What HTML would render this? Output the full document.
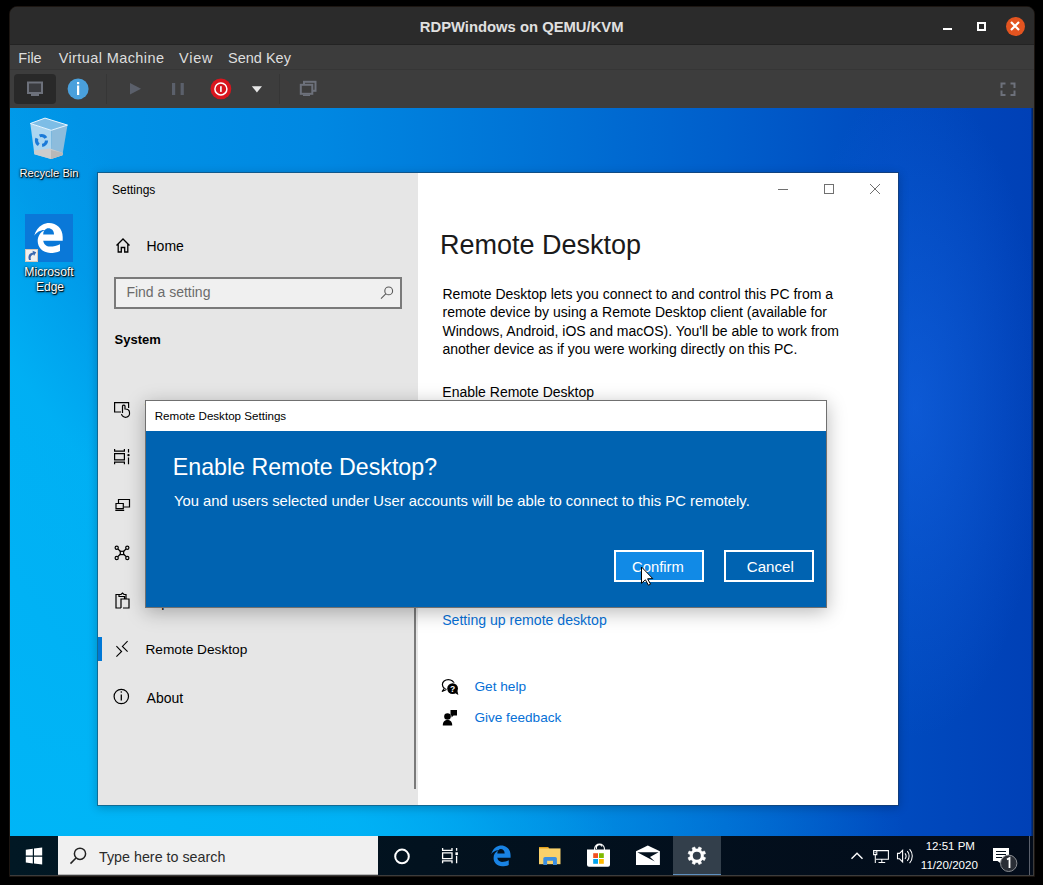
<!DOCTYPE html>
<html><head><meta charset="utf-8">
<style>
*{margin:0;padding:0;box-sizing:border-box}
html,body{width:1043px;height:885px;overflow:hidden;background:#000;font-family:"Liberation Sans",sans-serif}
.a{position:absolute}
.t{position:absolute;white-space:nowrap;line-height:1}
svg{position:absolute;overflow:visible}
#win{left:10px;top:7px;width:1024px;height:869px;background:#3c3c3c;border-radius:7px 7px 0 0;overflow:hidden}
#hdr{left:10px;top:7px;width:1024px;height:38px;background:#2b2b2b;border-bottom:1px solid #232323;border-radius:7px 7px 0 0}
#menu{left:10px;top:45px;width:1024px;height:25px;background:#3c3c3c;border-bottom:1px solid #363636}
#tool{left:10px;top:70px;width:1024px;height:38px;background:#3d3d3d}
.mt{color:#dedede;font-size:14.5px}
#disp{left:10px;top:108px;width:1023px;height:767px;overflow:hidden;
 background:radial-gradient(ellipse 130px 330px at 905px 300px, rgba(25,105,235,.5), rgba(25,105,235,0)),
 radial-gradient(ellipse 900px 460px at 0% 100%, rgba(0,182,247,.9) 0%, rgba(0,178,245,.6) 50%, rgba(0,170,240,0) 100%),
 linear-gradient(53deg, rgba(0,182,247,1) 0%, rgba(0,178,245,.9) 24%, rgba(0,170,240,.3) 33%, rgba(0,160,240,0) 40%),
 linear-gradient(90deg,#0096e7 0%,#0088e2 30%,#0074d6 50%,#005ecb 70%,#004cc0 85%,#0040b6 100%)}
</style></head><body>
<div class="a" style="left:9px;top:6px;width:1026px;height:871px;border:1px solid #1c1612;border-radius:8px 8px 0 0"></div>
<div id="win" class="a"></div>
<div id="hdr" class="a"></div>
<div class="t" style="left:419.8px;top:19.5px;font-size:14.8px;font-weight:bold;color:#e0e0e0">RDPWindows on QEMU/KVM</div>
<div class="a" style="left:943px;top:28px;width:9px;height:2px;background:#fff"></div>
<div class="a" style="left:977px;top:22px;width:9px;height:9px;border:2px solid #fff"></div>
<div class="a" style="left:1005.5px;top:16.5px;width:19px;height:19px;border-radius:50%;background:#e35420"></div>
<svg style="left:1015px;top:26px" width="1" height="1"><path d="M-4,-4L4,4M4,-4L-4,4" stroke="#fff" stroke-width="2.2"/></svg>
<div id="menu" class="a"></div>
<div class="t mt" style="left:18.3px;top:50.5px">File</div>
<div class="t mt" style="left:58.7px;top:50.5px;letter-spacing:.4px">Virtual Machine</div>
<div class="t mt" style="left:179px;top:50.5px;letter-spacing:.8px">View</div>
<div class="t mt" style="left:228px;top:50.5px">Send Key</div>
<div id="tool" class="a"></div>
<div class="a" style="left:14px;top:74px;width:42px;height:30px;border-radius:4px;background:#292929"></div>
<svg style="left:0;top:0" width="1" height="1">
 <rect x="28" y="82.5" width="14" height="10.5" fill="#3a3b3f" stroke="#6d717b" stroke-width="2"/>
 <rect x="31" y="94" width="8" height="2" fill="#6d717b"/>
 <circle cx="78.1" cy="88.9" r="10.5" fill="#4aa0dc"/>
 <rect x="77" y="82" width="2.2" height="2.2" fill="#fff"/>
 <rect x="77" y="85.5" width="2.2" height="9.5" fill="#fff"/>
 <rect x="106" y="74" width="1" height="30" fill="#363636"/>
 <path d="M130,83 L141,88.8 L130,94.6Z" fill="#5b606b"/>
 <rect x="172" y="83" width="3.2" height="12" fill="#5b606b"/>
 <rect x="180.6" y="83" width="3.2" height="12" fill="#5b606b"/>
 <circle cx="220.9" cy="88.8" r="10.4" fill="#d8161e"/>
 <circle cx="220.9" cy="88.9" r="6" fill="none" stroke="#fff" stroke-width="1.5"/>
 <rect x="220" y="86.2" width="1.8" height="5.7" fill="#eee"/>
 <path d="M251.8,86.2 H262 L256.9,92.4Z" fill="#e8e8e8"/>
 <rect x="279" y="74" width="1" height="30" fill="#363636"/>
 <rect x="304" y="81.8" width="11.5" height="9" fill="none" stroke="#6d717b" stroke-width="2"/>
 <rect x="300.8" y="84.8" width="11.5" height="9" fill="#3d3d3d" stroke="#6d717b" stroke-width="2"/>
 <rect x="303" y="94.5" width="7" height="1.5" fill="#6d717b"/>
 <path d="M1001.5,88V83.5H1005.5M1010.5,83.5H1014.5V88M1014.5,90.5V95H1010.5M1005.5,95H1001.5V90.5" fill="none" stroke="#6d717b" stroke-width="2"/>
</svg>

<div id="disp" class="a"></div>
<!-- desktop icons -->
<svg style="left:0;top:0" width="1" height="1">
 <path d="M30.3,123.5 L51.2,130.3 L51,159 L34.4,154.2Z" fill="#acd6f0"/>
 <path d="M51.2,130.3 L67.5,125.1 L62.4,155.2 L51,159Z" fill="#8dbcdc"/>
 <path d="M33.8,150.5 L50,148.5 L63,153 L62.4,155.2 L51,159 L34.4,154.2Z" fill="#cdcdcd"/>
 <path d="M51,150 L63,153 L62.4,155.2 L51,159Z" fill="#b8b8b8"/>
 <path d="M30.3,123.5 L45,118.1 L67.5,125.1 L51.2,130.3Z" fill="#7dbde6" stroke="#e8f5ff" stroke-width="1"/>
 <circle cx="41.5" cy="140.5" r="5" fill="none" stroke="#1a7ad8" stroke-width="3.2" stroke-dasharray="7 3.5"/>
</svg>
<div class="t" style="left:19.5px;top:168.3px;font-size:11.2px;color:#fff;text-shadow:1px 1px 1px #000,0 0 2px rgba(0,0,0,.9),0 1px 3px rgba(0,0,0,.6)">Recycle Bin</div>
<div class="a" style="left:25px;top:214px;width:48px;height:48px;background:#0a78d8"></div>
<svg style="left:0;top:0" width="1" height="1">
 <path fill-rule="evenodd" fill="#fff" d="M34.2,235.7 C35.5,231 38.5,227 42,225 C44.5,223.5 47,223 49.1,223 C56.5,223 62.7,228.5 62.7,237.1 L62.7,240.7 L43.2,240.7 C43.8,244.5 46.5,246.6 50,246.6 C53.5,246.6 57,245.5 60,244.2 L60,250.9 C57,252.3 53.5,252.9 50.3,252.9 C42.5,252.9 37.7,247.5 37.7,241.1 C37.7,236.5 40,232.5 44.8,230.1 C41,229.8 36.5,232.3 34.2,235.7Z M43.2,234.6 C43.3,232.5 43.8,231.1 44.8,230.1 C45.8,228.9 47,228.3 48.3,228.3 C51.5,228.3 54,230.5 54,234.6Z"/>
 <rect x="25.5" y="249.5" width="12" height="12" fill="#f0f0f0" stroke="#d8c8b8" stroke-width="1"/>
 <path d="M29,260 C27.5,256 29,253 33,252.5 L32.5,250.8 L36.2,252.2 L34,256 L33.6,254.5 C31,255 30,257 31,260Z" fill="#3a68b0"/>
</svg>
<div class="t" style="left:24.3px;top:266.3px;font-size:12.2px;color:#fff;text-shadow:1px 1px 1px #000,0 0 2px rgba(0,0,0,.9),0 1px 3px rgba(0,0,0,.6)">Microsoft</div>
<div class="t" style="left:36px;top:281.4px;font-size:12px;color:#fff;text-shadow:1px 1px 1px #000,0 0 2px rgba(0,0,0,.9),0 1px 3px rgba(0,0,0,.6)">Edge</div>

<!-- settings window -->
<div class="a" style="left:97px;top:172px;width:802px;height:634px;border:1px solid rgba(30,50,70,.55);box-shadow:0 2px 9px rgba(0,0,0,.22)"></div>
<div class="a" style="left:98px;top:173px;width:320px;height:632px;background:#e6e6e6"></div>
<div class="a" style="left:418px;top:173px;width:480px;height:632px;background:#fff"></div>
<div class="t" style="left:112px;top:183.6px;font-size:12px;color:#000">Settings</div>
<svg style="left:0;top:0" width="1" height="1">
 <path d="M116.5,245.5 L123,239 L129.5,245.5 M118.2,244 V252 H121.3 V247.5 H124.7 V252 H127.8 V244" fill="none" stroke="#000" stroke-width="1.3"/>
</svg>
<div class="t" style="left:146.5px;top:239.3px;font-size:14px;color:#000">Home</div>
<div class="a" style="left:114px;top:277px;width:288px;height:32px;border:2px solid #7a7a7a;background:#f0f0f0"></div>
<div class="t" style="left:126.4px;top:285px;font-size:14px;color:#6b6b6b">Find a setting</div>
<svg style="left:0;top:0" width="1" height="1">
 <circle cx="388.7" cy="290.9" r="3.9" fill="none" stroke="#5a5a5a" stroke-width="1.1"/>
 <path d="M386,293.7 L381,298.7" stroke="#5a5a5a" stroke-width="1.1"/>
</svg>
<div class="t" style="left:114.6px;top:333px;font-size:13px;font-weight:bold;color:#000">System</div>
<svg style="left:0;top:0" width="1" height="1" fill="none" stroke="#000" stroke-width="1.2">
 <path d="M121,412 H114.6 V402.6 H128.6 V408"/>
 <path d="M122.5,413 V406 A1.3,1.3 0 0 1 125,406 V409 C128,409 129.5,410 129.5,412.5 A4,4 0 0 1 121.5,414"/>
 <path d="M114.6,449 V451.2 H124.4 V449 M114.6,464.3 V462.1 H124.4 V464.3 M114.6,453.6 H124.4 V459.8 H114.6Z M128.5,449 V452.6 M128.5,457.6 V464.3"/>
 <circle cx="128.5" cy="455.1" r="1.2" fill="#000" stroke="none"/>
 <path d="M118.5,503 V499.5 H129.5 V507 H124"/>
 <path d="M115.3,510.4 H124.2 M116,503.5 H123.3 V508.6 H116Z"/>
 <path d="M118,549 L120.5,551.5 M126,549 L123.5,551.5 M118,556.5 L120.5,554 M126,556.5 L123.5,554"/>
 <rect x="120.3" y="551.3" width="3.3" height="3.3"/>
 <circle cx="116.7" cy="547.7" r="1.6"/><circle cx="127.3" cy="547.7" r="1.6"/><circle cx="116.7" cy="558" r="1.6"/><circle cx="127.3" cy="558" r="1.6"/>
 <path d="M119,594.5 H116 V608 H121 M123,608 H129 V599 H121 V608 M126,599 V594.5 H124 L122.5,593 L121,594.5 H119 V596.5 H124.5 V599"/>
 <path d="M116.4,646.2 L121.6,651.5 L116.4,656.7 M127.6,641.2 L122.4,646.4 L127.6,651.6" stroke-width="1.1"/>
 <circle cx="121.3" cy="696.5" r="7.2"/>
 <path d="M121.3,694.5 V700.5" stroke-width="1.3"/>
 <circle cx="121.3" cy="692" r=".8" fill="#000" stroke="none"/>
</svg>
<div class="t" style="left:145px;top:401.5px;font-size:14px;color:#000">Tablet mode</div>
<div class="t" style="left:145px;top:446px;font-size:14px;color:#000">Multitasking</div>
<div class="t" style="left:145px;top:494px;font-size:14px;color:#000">Projecting to this PC</div>
<div class="t" style="left:145px;top:542px;font-size:14px;color:#000">Shared experiences</div>
<div class="t" style="left:145px;top:595.4px;font-size:14px;color:#000">Clipboard</div>
<div class="a" style="left:98px;top:637px;width:4px;height:24px;background:#0078d7"></div>
<div class="t" style="left:145.4px;top:643.1px;font-size:13.7px;color:#000">Remote Desktop</div>
<div class="t" style="left:146.6px;top:691px;font-size:14px;color:#000">About</div>
<div class="a" style="left:414px;top:420px;width:2px;height:369px;background:#7a7a7a"></div>

<!-- content -->
<svg style="left:0;top:0" width="1" height="1" fill="none" stroke="#707070" stroke-width="1">
 <path d="M778,189.5 H788"/>
 <rect x="824.5" y="184.5" width="9" height="9"/>
 <path d="M870,184 L880,194 M880,184 L870,194"/>
</svg>
<div class="t" style="left:440px;top:231.9px;font-size:27px;color:#1a1a1a">Remote Desktop</div>
<div class="a" style="left:442.5px;top:285px;width:420px;font-size:14px;line-height:18.3px;color:#000">Remote Desktop lets you connect to and control this PC from a<br>remote device by using a Remote Desktop client (available for<br>Windows, Android, iOS and macOS). You'll be able to work from<br>another device as if you were working directly on this PC.</div>
<div class="t" style="left:442.3px;top:385.1px;font-size:14px;color:#000">Enable Remote Desktop</div>
<div class="t" style="left:442.2px;top:612.9px;font-size:14.1px;color:#0670d6">Setting up remote desktop</div>
<svg style="left:0;top:0" width="1" height="1">
 <ellipse cx="448.3" cy="684.6" rx="5.9" ry="5" fill="none" stroke="#000" stroke-width="1.2"/>
 <path d="M444.5,688.2 L442,691.5 L446.5,689.5" fill="#fff" stroke="#000" stroke-width="1.1"/>
 <circle cx="452.6" cy="688.6" r="6.2" fill="#fff"/>
 <circle cx="452.6" cy="688.6" r="5.4" fill="#000"/>
 <path d="M455,693 L458.3,695 L457.5,691" fill="#000"/>
 <text x="452.5" y="692" font-size="8.5" font-weight="bold" fill="#fff" text-anchor="middle" font-family="Liberation Sans">?</text>
 <circle cx="447.5" cy="716.5" r="3.3" fill="#000"/>
 <path d="M442.8,725.5 C442.8,721.5 444.8,720 447.5,720 C450.2,720 452.2,721.5 452.2,725.5Z" fill="#000"/>
 <path d="M450.5,710 H457 V715.5 H453.5 L451.5,717.5 V715.5 H450.5Z" fill="#000"/>
</svg>
<div class="t" style="left:474.4px;top:679.8px;font-size:13.7px;color:#0670d6">Get help</div>
<div class="t" style="left:474.4px;top:711.1px;font-size:13.6px;color:#0670d6">Give feedback</div>

<!-- dialog -->
<div class="a" style="left:145px;top:400px;width:682px;height:208px;border:1px solid #707070;background:#fff;box-shadow:0 4px 18px rgba(0,0,0,.28)"></div>
<div class="a" style="left:146px;top:431px;width:680px;height:176px;background:#0063b1"></div>
<div class="t" style="left:154.7px;top:410px;font-size:11.6px;color:#000">Remote Desktop Settings</div>
<div class="t" style="left:172.8px;top:456.3px;font-size:23.2px;color:#fff">Enable Remote Desktop?</div>
<div class="t" style="left:174px;top:493.5px;font-size:14.8px;color:#fff">You and users selected under User accounts will be able to connect to this PC remotely.</div>
<div class="a" style="left:614px;top:550px;width:90px;height:32px;border:2px solid #fff;background:#118ae6"></div>
<div class="a" style="left:724px;top:550px;width:90px;height:32px;border:2px solid #fff"></div>
<div class="t" style="left:632px;top:559.7px;font-size:14.8px;color:#fff">Confirm</div>
<div class="t" style="left:746.8px;top:558.7px;font-size:15.1px;color:#fff">Cancel</div>
<svg style="left:0;top:0" width="1" height="1">
 <path d="M641.5,567 V583.3 L645.4,579.8 L648.4,585.2 L650.6,584.2 L647.6,578.8 L652.8,578.6Z" fill="#fff" stroke="#000" stroke-width="1" stroke-linejoin="round"/>
</svg>


<div class="a" style="left:1031px;top:108px;width:2px;height:728px;background:linear-gradient(90deg,rgba(0,0,0,.15),rgba(0,0,0,.5))"></div>
<!-- taskbar -->
<div class="a" style="left:10px;top:836px;width:1023px;height:39px;background:linear-gradient(90deg,#011824 0%,#02121f 40%,#030c1a 100%)"></div>
<svg style="left:0;top:0" width="1" height="1">
 <path d="M25.8,849.8 L32.8,848.8 V855.5 H25.8Z M34,848.6 L42.2,847.5 V855.5 H34Z M25.8,856.7 H32.8 V863.4 L25.8,862.4Z M34,856.7 H42.2 V864.6 L34,863.5Z" fill="#fff"/>
</svg>
<div class="a" style="left:58px;top:836px;width:320px;height:39px;background:#f0f0f0;border-bottom:1px solid #b8b8b8"></div>
<svg style="left:0;top:0" width="1" height="1">
 <circle cx="80" cy="853.8" r="5.6" fill="none" stroke="#222" stroke-width="1.5"/>
 <path d="M76,858 L70.5,863.6" stroke="#222" stroke-width="1.5"/>
</svg>
<div class="t" style="left:99px;top:849.6px;font-size:14.3px;color:#2b2b2b">Type here to search</div>
<svg style="left:0;top:0" width="1" height="1">
 <circle cx="402" cy="856.4" r="6.8" fill="none" stroke="#fff" stroke-width="2"/>
 <path d="M442.6,848 V850.3 H452 V848 M442.6,863.2 V860.8 H452 V863.2 M442.6,852.9 H452 V858.7 H442.6Z M456.6,848 V850.8 M456.6,855.8 V863.2" fill="none" stroke="#fff" stroke-width="1.3"/>
 <rect x="455.4" y="852.3" width="2.5" height="2.7" fill="#fff"/>
 <g transform="translate(491.2,845.4) scale(0.68,0.70) translate(-34.2,-223)"><path fill-rule="evenodd" fill="#1983e4" d="M34.2,235.7 C35.5,231 38.5,227 42,225 C44.5,223.5 47,223 49.1,223 C56.5,223 62.7,228.5 62.7,237.1 L62.7,240.7 L43.2,240.7 C43.8,244.5 46.5,246.6 50,246.6 C53.5,246.6 57,245.5 60,244.2 L60,250.9 C57,252.3 53.5,252.9 50.3,252.9 C42.5,252.9 37.7,247.5 37.7,241.1 C37.7,236.5 40,232.5 44.8,230.1 C41,229.8 36.5,232.3 34.2,235.7Z M43.2,234.6 C43.3,232.5 43.8,231.1 44.8,230.1 C45.8,228.9 47,228.3 48.3,228.3 C51.5,228.3 54,230.5 54,234.6Z"/></g>
 <path d="M539,846.9 H548.3 L549.6,849.4 H539Z" fill="#e2a01c"/>
 <path d="M539,848.4 H560.5 V864.2 H539Z" fill="#f9d16b"/>
 <path d="M543.3,858.5 Q543.3,857 545,857 H555.2 Q556.9,857 556.9,858.5 V865 H553 V860.7 H547.1 V865 H543.3Z" fill="#3d8fe0"/>
 <path d="M587,849.6 H610 V864.8 Q610,866.8 608,866.8 H589 Q587,866.8 587,864.8Z" fill="#fff"/>
 <path d="M594.6,850 V848.5 A4.9,4.5 0 0 1 604.4,848.5 V850 M596.5,849 A3,3.2 0 0 1 602,846.5" fill="none" stroke="#fff" stroke-width="1.1"/>
 <rect x="593.2" y="853.2" width="4.8" height="4.8" fill="#f25022"/>
 <rect x="599" y="853.2" width="4.8" height="4.8" fill="#7fba00"/>
 <rect x="593.2" y="859" width="4.8" height="4.8" fill="#00a4ef"/>
 <rect x="599" y="859" width="4.8" height="4.8" fill="#ffb900"/>
 <path d="M636,851.3 L647.8,845.6 L659.9,851.3 V865 H636Z" fill="#fff"/>
 <path d="M637.3,852.2 L658.6,852.2 L650,857 L654.8,861.6Z" fill="#03101d"/>
</svg>
<div class="a" style="left:673px;top:836px;width:48px;height:39px;background:#333f4b;border-bottom:1px solid #5f90bf"></div>
<svg style="left:0;top:0" width="1" height="1">
 <path d="M697.92,848.99 L698.90,846.95 L701.50,848.03 L700.75,850.16 L702.34,851.75 L704.47,851.00 L705.55,853.60 L703.51,854.58 L703.51,856.82 L705.55,857.80 L704.47,860.40 L702.34,859.65 L700.75,861.24 L701.50,863.37 L698.90,864.45 L697.92,862.41 L695.68,862.41 L694.70,864.45 L692.10,863.37 L692.85,861.24 L691.26,859.65 L689.13,860.40 L688.05,857.80 L690.09,856.82 L690.09,854.58 L688.05,853.60 L689.13,851.00 L691.26,851.75 L692.85,850.16 L692.10,848.03 L694.70,846.95 L695.68,848.99Z" fill="#fff" stroke="#fff" stroke-width=".6" stroke-linejoin="round"/>
 <circle cx="696.8" cy="855.7" r="4" fill="#333f4b"/>
 <path d="M851.5,858.8 L857,853.3 L862.5,858.8" fill="none" stroke="#fff" stroke-width="1.4"/>
 <path d="M876.8,850.6 H888.4 V859.3 H876 M873.6,850.6 H876.8 V854.6 H873.6Z M875.3,854.6 V863 M881.8,859.3 V862.4 M878.5,862.4 H885.2" fill="none" stroke="#fff" stroke-width="1.05"/>
 <path d="M874.6,852 L875.3,853.2 L876,852" fill="none" stroke="#fff" stroke-width=".7"/>
 <path d="M897.5,853.4 H899.5 L902.6,850.3 V861.9 L899.5,858.8 H897.5Z" fill="none" stroke="#fff" stroke-width="1.1"/>
 <path d="M905,853.3 A4.5,4.5 0 0 1 905,858.9 M907.3,851.2 A7.5,7.5 0 0 1 907.3,861 M909.6,849.1 A10.5,10.5 0 0 1 909.6,863.1" fill="none" stroke="#fff" stroke-width="1.05"/>
 <path d="M993,848 H1009 V861 H1001 L1000.8,863.6 L997.5,861 H993Z" fill="#fff"/>
 <path d="M996,851.5 H1006 M996,854.5 H1006 M996,857.5 H1002" stroke="#03101d" stroke-width="1.1"/>
 <circle cx="1008.7" cy="863.3" r="8.2" fill="#2a2e36" stroke="#8a8d92" stroke-width="1"/>
 <path d="M1007,859.5 L1009.5,858 V868" fill="none" stroke="#fff" stroke-width="1.8"/>
 <rect x="1029" y="836" width="1" height="39" fill="#5a606c"/>
</svg>
<div class="t" style="left:925.7px;top:841.3px;font-size:11.5px;color:#fff">12:51 PM</div>
<div class="t" style="left:920.8px;top:859px;font-size:11.6px;color:#fff">11/20/2020</div>
</body></html>
